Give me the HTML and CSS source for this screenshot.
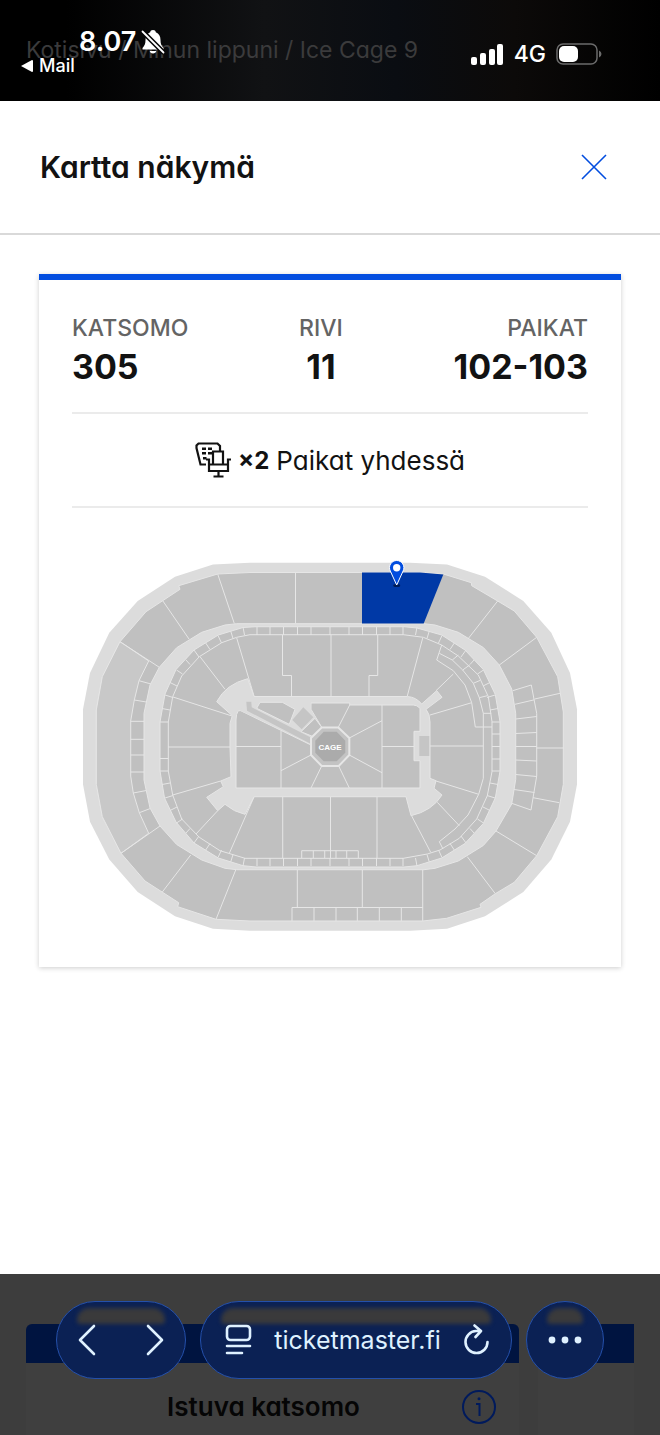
FILE: index.html
```html
<!DOCTYPE html>
<html lang="fi">
<head>
  <meta charset="UTF-8">
  <meta name="viewport" content="width=device-width, initial-scale=1">
  <title>Kartta näkymä</title>
  <link rel="stylesheet" href="styles.css">
</head>
<body>
  <header class="status-bar">
    <nav class="breadcrumb">Kotisivu / Minun lippuni / Ice Cage 9</nav>
    <div class="status-left">
      <div class="clock">
        <span>8.07</span>
        <svg width="24" height="26" viewBox="0 0 24 26">
          <path fill="#fff" d="M12 1c1.700 0 2.600.9 2.800 2.200C18 4.500 19.500 7 19.500 11c0 4 .8 5.500 3 8v1.500H1.500V19c2.200-2.500 3-4 3-8 0-4 1.500-6.500 4.700-7.800C9.400 1.900 10.300 1 12 1zM8.700 22h6.600c-.3 1.500-1.500 2.500-3.300 2.500S9 23.500 8.700 22z"/>
          <path stroke="#050506" stroke-width="5" d="M1 2l22 22"/>
          <path stroke="#fff" stroke-width="1.800" stroke-linecap="round" d="M1.500 2.500l21 21"/>
        </svg>
      </div>
      <a class="back-app" href="#">
        <svg width="12" height="12" viewBox="0 0 12 12"><path fill="#fff" d="M0 6l11-6q1 0 1 1v10q0 1-1 1z"/></svg>
        Mail
      </a>
    </div>
    <div class="status-right">
      <svg width="33" height="21" viewBox="0 0 33 21" fill="#fff">
        <rect x="0" y="13" width="6" height="8" rx="2"/>
        <rect x="9" y="9" width="6" height="12" rx="2"/>
        <rect x="18" y="5" width="6" height="16" rx="2"/>
        <rect x="26" y="0" width="6" height="21" rx="2"/>
      </svg>
      <span>4G</span>
      <svg width="46" height="22" viewBox="0 0 46 22">
        <rect x="1" y="1" width="40" height="20" rx="6" fill="none" stroke="#6b6b6b" stroke-width="1.500"/>
        <rect x="3" y="3" width="19" height="16" rx="5" fill="#fff"/>
        <path fill="#6b6b6b" d="M43 7.500q2.500 1 2.500 3.500t-2.500 3.500z"/>
      </svg>
    </div>
  </header>

  <main class="dialog">
    <div class="dialog-header">
      <h1>Kartta näkymä</h1>
      <button class="close-btn" aria-label="Sulje">
        <svg width="26" height="26" viewBox="0 0 26 26"><path stroke="#024ddf" stroke-width="1.600" d="M1 1l24 24M25 1L1 25"/></svg>
      </button>
    </div>

    <section class="card">
      <dl class="seat-info">
        <div><dt>KATSOMO</dt><dd>305</dd></div>
        <div><dt>RIVI</dt><dd>11</dd></div>
        <div><dt>PAIKAT</dt><dd>102-103</dd></div>
      </dl>

      <div class="together">
        <svg width="36" height="36" viewBox="0 0 36 36" fill="none" stroke="#121212" stroke-width="2.200">
          <path d="M11 22.500H5.500L1.500 6V3.500L3.500 1.500h19L25 4v5"/>
          <path fill="#121212" stroke="none" d="M7 5.500h4v2.500H7zM13 5.500h4v2.500h-4zM7 10h4v2.500H7zM13 10h4v2.500h-4zM8 15h3.500v2.500H8z"/>
          <path d="M18 22V9.500h10V22M11 17.500h3V29h19V17.500h3M14 22.500h19M23.500 29v5.500M18.500 34.500h10"/>
        </svg>
        <strong>×2</strong>
        <span>Paikat yhdessä</span>
      </div>

      <svg class="arena-map" viewBox="72 540 516 400" role="img" aria-label="Paikkakartta">
        <defs>
          <path id="ticks" d="M257 627v8M270 627v8M283.500 627v8M297.500 627v8M311 627v8M243 627l1.500 8M230.700 631l2.300 7.500M218 635.500l3.500 7.500M205.700 643l4.300 6.500M194 650l5 7M186 660l4 4.500M176.500 670l6 4M170 682.500l7 3.500M165 695l8 2.500M162 708.500l8 1.500M160 722h8.300"/>
        </defs>

        <path class="aisle" d="M213 564.500L250 562.700H410L447 564.500 485 576.700 523.300 601 551.300 632.700 570 673 577 709.300V784.300L570 821.700 551.300 859.500 523.300 892 485 916.300 447 928.700 410 930.700H250L213 928.700 175 916.300 137.700 892 109.300 859.500 90 821.700 83 784.300V709.300L90 673 109.300 632.700 137.700 601 175 576.700z"/>

        <!-- upper tier -->
        <path class="seats" d="M217.700 574L250 572.500H420L443.300 574 471.300 582.700 471.700 585.700 497.700 601 514.300 611 536.700 637.300 557.700 676.700 563.300 712V784.300L557.700 816.700 536.700 855.700 514.300 882.300 495.300 893.700 480 904.300 481 907.300 446.700 918.300 422.700 921H250L216 919.300 177.700 906.700 178.700 902.700 145 881 121 853.300 102.300 816.700 96.300 784.300V710L102.300 676.700 120 641.700 146 611.700 180 589.300 178.700 585.700z"/>
        <path class="side" d="M120 641.700L148.700 661 139 680.700 134.300 700 130.700 721V776L133.300 793 139.300 812.700 148.700 833.300 121 853.300 102.300 816.700 96.300 784.300V710L102.300 676.700z"/>
        <path class="line" d="M120 641.700l39.300 25.600M162.700 600.700L189 639M217.700 574l16.600 49.500M295.500 572.500v51M497.700 601l-29 37M536.700 637.300L499.300 665M534.700 699l25.300-5.700M536.700 748h26.600M533 797.700l26.300 5M496 831l40.700 24.700M467.300 856.700l28 37M422.700 870v51M362.300 870v37.500M297.300 870v37.500M235.700 870L216 919.300M190.700 855l-28.400 37M160 826l-39 27.300"/>
        <path class="line" d="M139 680.700l12 3.300M134.300 700l12 2M130.700 721.300H144M130.700 739.300H144M130.700 755H144M130.700 772H144M133.300 793l13-2.500M139.300 812.700l11-4.200"/>
        <path class="line" d="M512.700 690.700L531.300 685 536.700 713.300V776L531 810 511.700 803.300M515 704.300l19.300-4.500M515.700 719l21-2.500M515.700 733.500l21-1M515.700 746.500h21M515.700 760l21 1M515.700 774.500l21 2M514 789.500l20.500 3"/>
        <path class="line" d="M292 921V907.500H422.700M314 907.500V921M336 907.500V921M357.300 907.500V921M379.300 907.500V921M401.300 907.500V921"/>

        <path class="aisle edge" d="M236.700 623.700H424L435 625 458.300 632.300 483.300 647.500 499.300 665 511.700 689 515.700 713.300V779.500L511.700 804 496 831 483.300 845.500 458.300 861 435 868.300 424 869.700H236.700L225 868.300 201.700 860 176.700 844.500 160 826 150 808 144 780V713.300L150 685 159.300 667.300 176.700 647.700 201.700 632.300 225 625z"/>

        <!-- lower tier -->
        <path class="seats" d="M256 626.700H404L417 628 441.700 635 465 650 483.300 669.500 495.300 694.500 500 721.700V771.300L495.300 798 483.300 823.500 465 843.500 441.700 858 417 865.700 404 867H256L243 865.700 218.300 858 194 843 176 822 164.500 798 160 771V722L165 694 176 669.500 194 650 218.300 635 243 627.500z"/>
        <path class="line" d="M250 634.700H403.300L423.300 637.300 441.700 645 458.300 656 478.300 675 488.300 696.700 492 721.700V771.700L487.300 795.700 476.700 819 459.300 838.300 440 850 427.300 854 403.300 858.300H245L220 850.700 199.300 837.300 181.700 819 172.700 795 168.300 771V722L172.700 696.700 181.700 676 199.300 656.700 221.700 642.700 236.700 637.300z"/>
        <g class="line">
          <use href="#ticks"/>
          <use href="#ticks" transform="matrix(-1 0 0 1 660 0)"/>
          <use href="#ticks" transform="matrix(1 0 0 -1 0 1493)"/>
          <use href="#ticks" transform="matrix(-1 0 0 -1 660 1493)"/>
          <path d="M330 627v8M330 858v8M160 758.500h8.300M492 734h8M492 746.500h8M492 759h8"/>
        </g>
        <path class="line" d="M236.700 638L254 696M200 656.700l25 32.600M173 697l59 19M168 747h62M282.500 635v40.500h9V696M331 635v61M377.700 635v40.500H369V696M422.700 638L407.300 696M453.300 674L436 690.700M471.700 702.700L430 715M430 746h53.300"/>
        <path class="line" d="M172.700 795l48-14M196 834l21.700-23.300M229.300 853.300L254 797M282.700 797v61M330.500 797v61M377 797v61M430.700 852.300L411.700 816M459.300 825.700l-22-23.400M478.700 794.300L435 780.700"/>
        <path class="line" d="M301.700 858v-7.300h56.600v7.300M313.300 850.700v7.300M324.700 850.700v7.300M336 850.700v7.300M346.700 850.700v7.300"/>
        <path class="line" d="M441.700 645L436.700 660 453.300 670.700 465 685 471.700 702.700 475.300 727H492M439.300 653.300L452.300 660 462.700 670 473.300 683.300 479.300 697.700 483.300 713.300V778.300L478.700 794.300 468 815 455 829 439.300 841.700 443 849M452.300 660l6-5M462.700 670l7-5M473.300 683.300l7-3M479.300 697.700l8-2M483.300 713.300h8"/>

        <!-- floor level -->
        <path class="aisle edge" d="M254 696.500H407.300Q416 697 421.700 704L436.700 690.700 442 697.300 426 709.300Q430 714 430 722V778.300L436 780.700 434 788.300 442 795Q432 811 411 815.700L406 796.700H254L245 814.300Q234 812 225 804.300L217.700 810.700 206.700 797.300 223.300 786.700 220.700 781 231 776.700 230 746.700V723.300L232.300 715.700 216.700 701.700Q226 684 247.700 678.700z"/>
        <path class="seats edge" d="M240.700 710.700H238.300Q236 714 236 720V788H420V760.700H414V731.300H420V708.300Q417 705 413.300 705H349.700V703H311V709.300L321.700 727.300 311 745 z"/>
        <path class="aisle" d="M243 706L260 701H310.500V709.300L321.700 727.300 313 745 240.700 710.700z"/>
        <path class="seats edge" d="M260 702.300H282.300L295 709.300 289.300 724.300 256.700 708.300zM315 718.300L321.700 727.300 313.300 736.700 301 731.700z"/>
        <path class="block" d="M303.300 707.300L313.300 717.300 301.700 729.300 292.300 720zM246.300 701.700H251.300L251.700 707.300 312.300 738.300 311 744 247 710.700zM419.300 736h10v20h-10z"/>
        <path class="line" d="M236 746.500H281M281 731V788M281 770.700L311 755M311 788L321.700 766M338.700 766L349.300 788M349.300 755L382 772.700M349.300 738L382 720.700M338.300 727.300L349.700 705M382 705V788M382 746.500H414"/>
        <path class="cage-rim" d="M321.700 727.500H338.300L349.300 738V755L338.700 766H321.700L311 755V738z"/>
        <path class="cage" d="M323.700 731.700H336.700L345.300 740.700V752.700L336.700 761.300H323.700L315.300 752.700V740.700z"/>
        <text class="cage-label" x="330" y="749.500">CAGE</text>

        <!-- own section and pin -->
        <path class="selected" d="M362 572.500H420L443.300 574.500 423.700 623.500H362z"/>
        <ellipse cx="396.700" cy="585.500" rx="3.500" ry="1.500" fill="#001c55"/>
        <path class="pin" d="M396.700 585L390.300 571A7.200 7.200 0 1 1 403.100 571z"/>
        <circle cx="396.700" cy="567.700" r="3.700" fill="#fff"/>
      </svg>
    </section>
  </main>

  <footer class="bottom">
    <div class="tickets">
      <article class="ticket">
        <div class="ticket-bar"></div>
        <div class="ticket-body">
          <span class="ticket-type">Istuva katsomo</span>
          <button class="info-btn" aria-label="Lisätietoja">
            <svg width="36" height="36" viewBox="0 0 36 36" fill="none" stroke="#001a5c" stroke-width="2">
              <circle cx="18" cy="18" r="16"/>
              <path d="M15 15h3.500v12"/>
              <circle cx="18" cy="9.700" r="1.500" fill="#001a5c" stroke="none"/>
            </svg>
          </button>
        </div>
      </article>
      <article class="ticket next">
        <div class="ticket-bar"></div>
      </article>
    </div>

    <div class="toolbar">
      <div class="pill nav">
        <button aria-label="Takaisin"><svg width="20" height="32" viewBox="0 0 20 32"><path d="M17 2L3 16l14 14"/></svg></button>
        <button aria-label="Eteenpäin"><svg width="20" height="32" viewBox="0 0 20 32"><path d="M3 2l14 14L3 30"/></svg></button>
      </div>
      <div class="pill address">
        <button aria-label="Sivun valikko">
          <svg width="28" height="32" viewBox="0 0 28 32"><rect x="2" y="2" width="23" height="14" rx="3.500"/><path d="M2 22h23M2 29h15"/></svg>
        </button>
        <input type="text" value="ticketmaster.fi" aria-label="Osoite">
        <button aria-label="Lataa uudelleen">
          <svg width="28" height="32" viewBox="0 0 28 32"><path d="M17 7H14A11 11 0 1 0 25.500 18M12.500 1.500L19 7 13.500 13"/></svg>
        </button>
      </div>
      <div class="pill more">
        <button aria-label="Lisää"><svg width="34" height="8" viewBox="0 0 34 8"><g fill="#dff1ff" stroke="none"><circle cx="4" cy="4" r="3.400"/><circle cx="17" cy="4" r="3.400"/><circle cx="30" cy="4" r="3.400"/></g></svg></button>
      </div>
    </div>
  </footer>
</body>
</html>
```
FILE: styles.css
```css
* {
  box-sizing: border-box;
}

body {
  margin: 0;
  min-height: 100vh;
  display: flex;
  flex-direction: column;
  background: #fff;
  color: #121212;
  font-family: Inter, sans-serif;
}

button {
  padding: 0;
  border: none;
  background: none;
  cursor: pointer;
}

svg {
  display: block;
}

/* single-storey a */
h1,
.breadcrumb,
.together,
.ticket-type {
  font-feature-settings: "cv11";
}

/* status bar */
.status-bar {
  position: relative;
  display: flex;
  justify-content: space-between;
  height: 101px;
  padding: 27px 58px 0 21px;
  background: linear-gradient(to right, #000 10%, #111214 40%, #0a0d12 60%, #0c0a09 78%, #000);
  color: #fff;
}

.breadcrumb {
  position: absolute;
  left: 26px;
  top: 34px;
  color: #3b3b3c;
  font-size: 23px;
  line-height: 32px;
}

.status-left {
  position: relative;
}

.clock {
  display: flex;
  align-items: center;
  gap: 5px;
  padding-left: 58px;
  font-size: 27px;
  font-weight: 600;
  line-height: 30px;
}

.back-app {
  display: flex;
  align-items: center;
  gap: 6px;
  color: #fff;
  font-size: 18px;
  font-weight: 500;
  line-height: 18px;
  text-decoration: none;
}

.status-right {
  display: flex;
  align-items: center;
  gap: 10px;
  height: 54px;
  font-size: 23px;
  font-weight: 500;
}

/* dialog */
.dialog {
  flex: 1;
}

.dialog-header {
  display: flex;
  align-items: center;
  justify-content: space-between;
  height: 134px;
  padding: 0 53px 0 40px;
  border-bottom: 2px solid #d9d9d9;
}

h1 {
  margin: 0;
  font-size: 30px;
  font-weight: 600;
}

.card {
  margin: 39px 39px 0;
  padding: 35px 33px 27px;
  border-top: 6px solid #024ddf;
  box-shadow: 0 1px 5px rgba(0, 0, 0, 0.2);
}

.seat-info {
  display: flex;
  justify-content: space-between;
  margin: 0;
  padding-bottom: 23px;
  border-bottom: 2px solid #ebebeb;
  text-align: center;
}

.seat-info div:first-child {
  text-align: left;
}

.seat-info div:last-child {
  text-align: right;
}

.seat-info dt {
  color: #646464;
  font-size: 23px;
  font-weight: 500;
  line-height: 26px;
}

.seat-info dd {
  margin: 4px 0 0;
  font-size: 34px;
  font-weight: 700;
  line-height: 44px;
}

.together {
  display: flex;
  align-items: center;
  justify-content: center;
  gap: 7px;
  height: 94px;
  border-bottom: 2px solid #ebebeb;
  font-size: 26px;
}

.together strong {
  font-size: 24px;
}

/* arena map */
.arena-map {
  width: 100%;
  margin-top: 32px;
}

.aisle {
  fill: #dcdcdc;
}

.seats {
  fill: #c0c0c0;
  stroke: #e6e6e6;
}

.side {
  fill: #c8c8c8;
  stroke: #e6e6e6;
}

.edge {
  stroke: #e6e6e6;
}

.line {
  fill: none;
  stroke: #e6e6e6;
}

.block {
  fill: #c5c5c5;
}

.cage-rim {
  fill: #c3c3c3;
  stroke: #e6e6e6;
  stroke-width: 2;
}

.cage {
  fill: #ababab;
}

.cage-label {
  fill: #fff;
  font: bold 8px "Liberation Sans", sans-serif;
  text-anchor: middle;
}

.selected {
  fill: #0039a6;
}

.pin {
  fill: #024ddf;
  stroke: #fff;
}

/* page behind the browser toolbar */
.bottom {
  position: relative;
  padding: 50px 26px 0;
  overflow: hidden;
  background: #3d3d3d;
}

.tickets {
  display: flex;
  gap: 19px;
}

.ticket {
  flex: 1;
  border-radius: 6px 6px 0 0;
  background: #3f3f3f;
  overflow: hidden;
}

.ticket.next {
  flex: 0 0 96px;
  border-radius: 0;
}

.ticket-bar {
  height: 39px;
  background: #001440;
}

.ticket-body {
  display: flex;
  align-items: center;
  height: 72px;
  padding: 16px 22px 0 40px;
}

.ticket-type {
  flex: 1;
  color: #050505;
  font-size: 26px;
  font-weight: 600;
  line-height: 36px;
  text-align: center;
}

/* browser toolbar */
.toolbar {
  position: absolute;
  top: 27px;
  left: 56px;
  right: 56px;
  display: flex;
  gap: 14px;
}

.pill {
  position: relative;
  display: flex;
  align-items: center;
  justify-content: space-between;
  height: 78px;
  border: 1px solid #2450ab;
  border-radius: 39px;
  background: #0b2154;
}

.pill::before {
  content: "";
  position: absolute;
  top: 6px;
  left: 20px;
  right: 20px;
  height: 16px;
  border-radius: 12px 12px 4px 4px;
  background: #3a3a3b;
  filter: blur(2px);
}

.pill svg {
  position: relative;
  fill: none;
  stroke: #dff1ff;
  stroke-width: 2.6px;
  stroke-linecap: round;
  stroke-linejoin: round;
}

.nav {
  width: 130px;
  padding: 0 20px;
}

.address {
  flex: 1;
  min-width: 0;
  padding: 0 21px 0 24px;
}

.address input {
  flex: 1;
  min-width: 0;
  padding: 0;
  border: none;
  background: none;
  color: #dff1ff;
  font: 25px Inter, sans-serif;
  text-align: center;
}

.more {
  width: 78px;
  justify-content: center;
}
```
